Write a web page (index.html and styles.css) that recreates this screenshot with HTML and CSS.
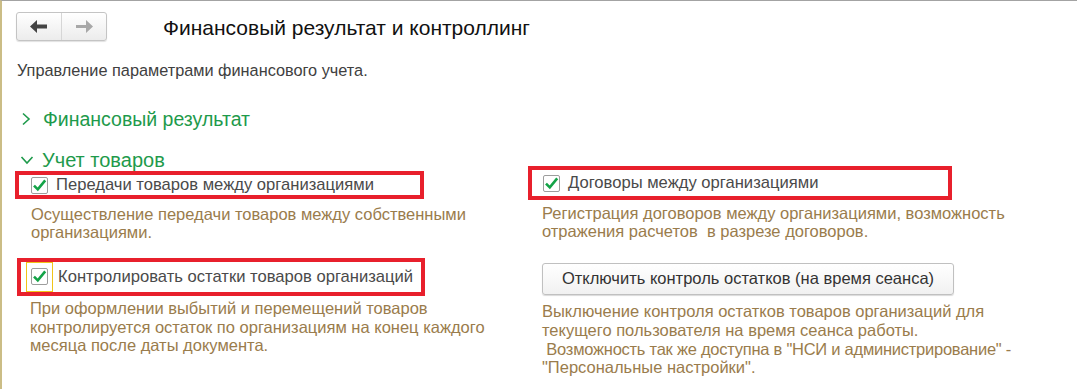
FILE: index.html
```html
<!DOCTYPE html>
<html lang="ru">
<head>
<meta charset="utf-8">
<link rel="stylesheet" href="styles.css">
</head>
<body>
<div class="page">
  <div class="header">
    <div class="nav">
      <div class="nav-btn back">
        <svg width="18" height="13" viewBox="0 0 18 13"><path d="M0 6.5 L7 0 V4.5 H17 V8.5 H7 V13 Z" fill="#444"/></svg>
      </div>
      <div class="nav-btn fwd">
        <svg width="18" height="13" viewBox="0 0 18 13"><path d="M18 6.5 L11 0 V5 H1 V8 H11 V13 Z" fill="#a8a8a8"/></svg>
      </div>
    </div>
    <div class="title">Финансовый результат и контроллинг</div>
  </div>
  <div class="subtitle">Управление параметрами финансового учета.</div>

  <div class="group collapsed">
    <svg class="chev" width="10" height="14" viewBox="0 0 10 14"><path d="M2 1.5 L8 7 L2 12.5" fill="none" stroke="#1e9a4b" stroke-width="1.6"/></svg>
    <span>Финансовый результат</span>
  </div>

  <div class="group expanded">
    <svg class="chev" width="14" height="10" viewBox="0 0 14 10"><path d="M1.5 2 L7 8 L12.5 2" fill="none" stroke="#1e9a4b" stroke-width="1.6"/></svg>
    <span>Учет товаров</span>
  </div>

  <div class="grid">
    <div class="cell c1">
      <div class="mark mark-a">
        <span class="cb"><svg width="15" height="15" viewBox="0 0 15 15"><path d="M2 7.6 L5.8 11.4 L13.2 2.4" fill="none" stroke="#13a347" stroke-width="2.6"/></svg></span>
        <span class="label">Передачи товаров между организациями</span>
      </div>
      <div class="desc">Осуществление передачи товаров между собственными<br>организациями.</div>
    </div>
    <div class="cell c2">
      <div class="mark mark-b">
        <span class="cb"><svg width="15" height="15" viewBox="0 0 15 15"><path d="M2 7.6 L5.8 11.4 L13.2 2.4" fill="none" stroke="#13a347" stroke-width="2.6"/></svg></span>
        <span class="label">Договоры между организациями</span>
      </div>
      <div class="desc">Регистрация договоров между организациями, возможность<br>отражения расчетов &nbsp;в разрезе договоров.</div>
    </div>
    <div class="cell c3">
      <div class="mark mark-c">
        <span class="focus"><span class="cb"><svg width="15" height="15" viewBox="0 0 15 15"><path d="M2 7.6 L5.8 11.4 L13.2 2.4" fill="none" stroke="#13a347" stroke-width="2.6"/></svg></span></span>
        <span class="label">Контролировать остатки товаров организаций</span>
      </div>
      <div class="desc">При оформлении выбытий и перемещений товаров<br>контролируется остаток по организациям на конец каждого<br>месяца после даты документа.</div>
    </div>
    <div class="cell c4">
      <div class="button">Отключить контроль остатков (на время сеанса)</div>
      <div class="desc">Выключение контроля остатков товаров организаций для<br>текущего пользователя на время сеанса работы.<br><span class="tight">&nbsp;Возможность так же доступна в "НСИ и администрирование" -</span><br>"Персональные настройки".</div>
    </div>
  </div>
</div>
</body>
</html>
```
FILE: styles.css
```css
html, body {
  margin: 0;
  padding: 0;
  background: #fff;
}
body {
  font-family: "Liberation Sans", Arial, sans-serif;
  width: 1077px;
  height: 389px;
  overflow: hidden;
}
.page {
  box-sizing: border-box;
  height: 389px;
  border-left: 2px solid #cbbd86;
  border-top: 1px solid #a3a3a3;
  padding-left: 13px;
}
.header {
  display: flex;
  align-items: flex-start;
  height: 40px;
  padding-top: 11px;
}
.nav {
  display: flex;
  width: 91px;
  height: 29px;
  margin-left: 1px;
  box-sizing: border-box;
  border: 1px solid #c4c4c4;
  border-radius: 3px;
  background: linear-gradient(#ffffff, #ececec);
  box-shadow: 0 1px 1px rgba(0,0,0,0.12);
}
.nav-btn {
  flex: 1;
  display: flex;
  align-items: center;
  justify-content: center;
}
.nav-btn.back {
  border-right: 1px solid #d6d6d6;
}
.title {
  margin-left: 56px;
  margin-top: 4px;
  font-size: 21px;
  line-height: 24px;
  color: #111;
}
.subtitle {
  margin-top: 9px;
  padding-left: 2px;
  font-size: 16.3px;
  line-height: 19px;
  color: #404040;
}
.group {
  display: flex;
  align-items: center;
  color: #1e9a4b;
  font-size: 19.5px;
  line-height: 22px;
  height: 22px;
  padding-left: 6px;
}
.group .chev {
  margin-right: 12px;
}
.group.collapsed {
  margin-top: 28px;
}
.group.expanded {
  margin-top: 21px;
  font-size: 20px;
  height: 18px;
}
.group.expanded .chev {
  margin-left: -1px;
  margin-right: 8px;
}
.grid {
  display: grid;
  grid-template-columns: 513px 430px;
  align-items: start;
}
.cell {
  display: flex;
  flex-direction: column;
}
.mark {
  display: flex;
  align-items: center;
  border: 4px solid #e8202c;
  box-sizing: border-box;
}
.mark-a {
  width: 409px;
  height: 28px;
  margin-top: 2px;
  padding-left: 12px;
}
.mark-b {
  width: 424px;
  height: 34px;
  margin-top: -3px;
  padding-left: 11px;
}
.mark-c {
  width: 408px;
  height: 38px;
  margin-top: 15.5px;
  margin-left: 2px;
  padding-left: 5px;
}
.cb {
  width: 17px;
  height: 17px;
  box-sizing: border-box;
  border: 1px solid #9d9d9d;
  border-radius: 2px;
  background: #fff;
  display: flex;
  align-items: center;
  justify-content: center;
  flex: none;
}
.focus {
  width: 27px;
  height: 30px;
  box-sizing: border-box;
  border: 1px solid #f0c419;
  display: flex;
  align-items: center;
  justify-content: center;
  flex: none;
}
.label {
  margin-left: 8px;
  font-size: 16.6px;
  color: #4a4a4a;
  white-space: nowrap;
}
.mark-c .label {
  margin-left: 5px;
}
.desc {
  font-size: 16.5px;
  line-height: 18.8px;
  color: #9a7c4c;
  white-space: nowrap;
}
.tight {
  letter-spacing: -0.25px;
}
.c1 .desc {
  margin-top: 5.5px;
  padding-left: 16px;
}
.c2 .desc {
  margin-top: 3.5px;
  padding-left: 14px;
}
.c3 .desc {
  margin-top: 3.5px;
  padding-left: 15px;
  line-height: 18.5px;
}
.c4 .desc {
  margin-top: 7.5px;
  padding-left: 14px;
  line-height: 18.7px;
}
.button {
  margin-top: 20.5px;
  margin-left: 14px;
  width: 412px;
  height: 32px;
  box-sizing: border-box;
  border: 1px solid #c0c0c0;
  border-radius: 3px;
  background: linear-gradient(#ffffff, #f1f1f1);
  box-shadow: 0 1px 1px rgba(0,0,0,0.15);
  display: flex;
  align-items: center;
  justify-content: center;
  font-size: 16.5px;
  color: #333;
}
```
